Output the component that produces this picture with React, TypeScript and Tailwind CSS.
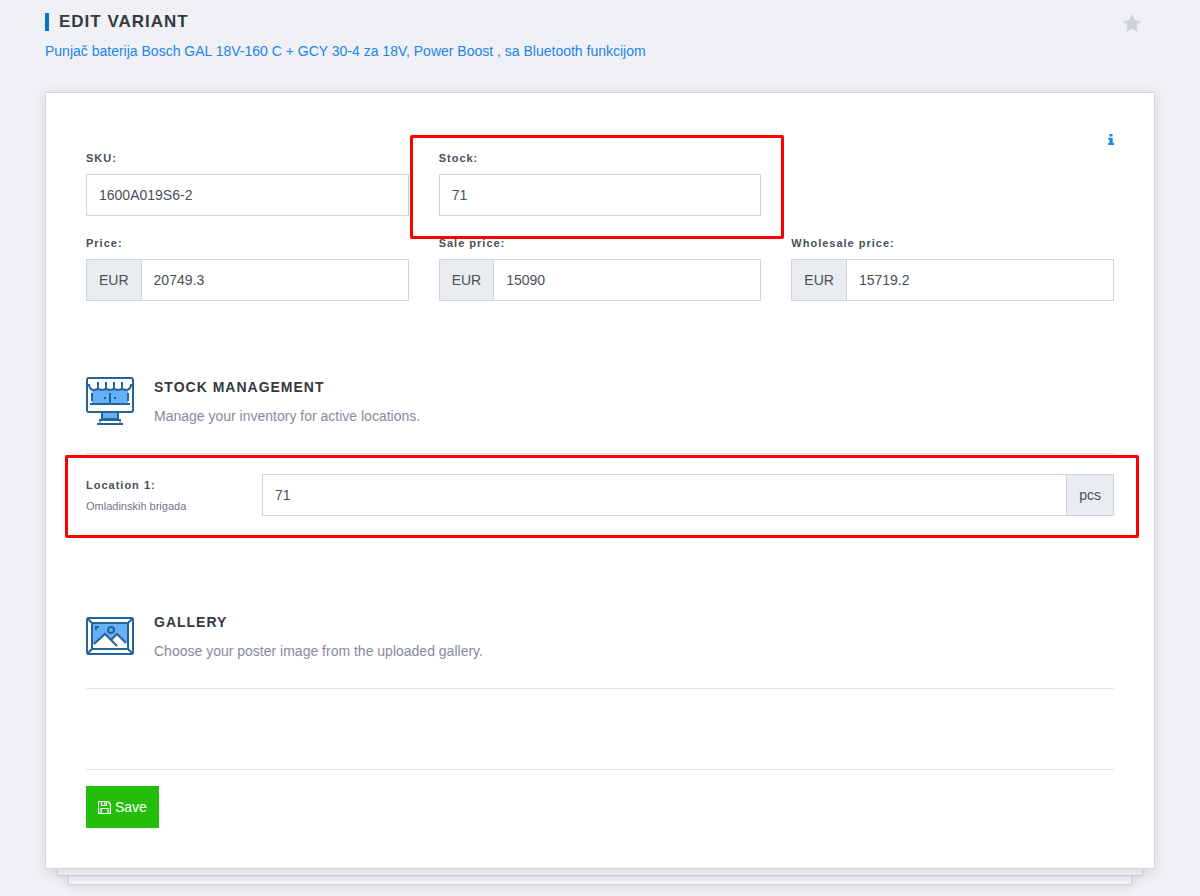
import React from 'react';

const BORDER = 'border-[#ced4da]';

type FieldProps = {
  id: string;
  label: string;
  value: string;
  prefix?: string;
  highlighted?: boolean;
};

function Field({ id, label, value, prefix, highlighted }: FieldProps) {
  return (
    <div className="relative flex min-w-0 flex-col gap-2">
      <label htmlFor={id} className="text-[11px] leading-4 font-bold tracking-[1px] text-[#495057]">
        {label}
      </label>
      <div className={`flex h-[42px] border bg-white ${BORDER}`}>
        {prefix && (
          <span className={`flex items-center border-r bg-[#e9ecf1] px-3 ${BORDER}`}>{prefix}</span>
        )}
        <input id={id} type="text" defaultValue={value} className="min-w-0 flex-1 bg-transparent px-3 outline-none" />
      </div>
      {highlighted && (
        <div className="pointer-events-none absolute -top-[15px] -right-[23px] -bottom-[23px] -left-[29px] rounded-[2px] border-3 border-[#ff0000]" />
      )}
    </div>
  );
}

function StarIcon() {
  return (
    <svg viewBox="0 0 20 19" className="h-[19px] w-5" fill="currentColor" aria-hidden="true">
      <path d="M10 0l2.700 6.200 6.800.7-5.100 4.500 1.500 6.900-5.900-3.500-5.900 3.500 1.500-6.900L.5 6.900l6.800-.7z" />
    </svg>
  );
}

function InfoIcon() {
  return (
    <svg viewBox="0 0 6 11" className="h-[11px] w-[6px]" fill="currentColor" aria-hidden="true">
      <path d="M1.500 0h3v2.500h-3zM.3 3.800h4.400V9H6v2H0V9h1.500V5.700H.3z" />
    </svg>
  );
}

function StoreIcon() {
  return (
    <svg viewBox="0 0 48 50" className="h-[50px] w-12 shrink-0" fill="none" stroke="#266396" strokeWidth="2" aria-hidden="true">
      <rect x="16" y="36" width="16" height="7" fill="#66b0f7" />
      <rect x="1" y="2" width="46" height="34" rx="2" fill="#fff" />
      <path d="M6 13h36v14H6z" fill="#66b0f7" stroke="none" />
      <path d="M1 9h2l1 3q1 2 4 2l4-1 4 1 4-1 4 1 4-1 4 1 4-1 4 1q3 0 4-2l1-3h2" />
      <path d="M12 6v7M20 6v7M28 6v7M36 6v7" />
      <path d="M6 17v8M42 17v8M24 17v10M4 28h40" />
      <path d="M18 22h2M28 22h2" />
      <path d="M13 44h22M11 48h26" />
      <path d="M14 44v4M34 44v4" strokeWidth="1" />
    </svg>
  );
}

function GalleryIcon() {
  return (
    <svg viewBox="0 0 48 38" className="h-[38px] w-12 shrink-0" fill="none" stroke="#266396" strokeWidth="2" aria-hidden="true">
      <rect x="1" y="1" width="46" height="36" rx="2" fill="#fff" />
      <rect x="6" y="6" width="36" height="26" fill="#66b0f7" />
      <path d="M7 28l12-11 7 6 5-6 11 10v4H7z" fill="#fff" stroke="none" />
      <path d="M8 27l11-10 12 12M25 23l6-6 9 9" />
      <circle cx="25" cy="13" r="3" />
      <path d="M10 13v-3h3" />
      <path d="M1 1l5 5M47 1l-5 5M1 37l5-5M47 37l-5-5" />
      <rect x="6" y="6" width="36" height="26" />
    </svg>
  );
}

function SaveIcon() {
  return (
    <svg viewBox="0 0 13 13" className="size-[13px]" fill="none" stroke="currentColor" strokeWidth="1.200" aria-hidden="true">
      <path d="M.5 1.500a1 1 0 0 1 1-1h8.500l2.500 2.500v8.500a1 1 0 0 1-1 1h-10a1 1 0 0 1-1-1z" />
      <path d="M3.500.5v4h5v-4M3 12.500v-5h7v5" />
      <path d="M7 1v3" />
    </svg>
  );
}

type SectionHeaderProps = { icon: React.ReactNode; title: string; text: string };

function SectionHeader({ icon, title, text }: SectionHeaderProps) {
  return (
    <div className="flex h-[78px] items-start gap-5 border-b border-[#e4e5e7]">
      {icon}
      <div className="flex flex-col gap-[9px] pt-px">
        <h2 className="text-sm leading-5 font-bold tracking-[1px] text-[#343a40]">{title}</h2>
        <p className="leading-5 text-[#868b9b]">{text}</p>
      </div>
    </div>
  );
}

export default function App() {
  return (
    <div className="min-h-screen bg-[#f0f1f7] px-[45px] pt-3 pb-2 font-['Liberation_Sans',Arial,sans-serif] text-sm text-[#495057]">
      <header className="flex h-20 items-start justify-between">
        <div>
          <h1 className="flex h-5 items-center gap-[10px] text-[17px] font-bold tracking-[1px] text-[#343a40]">
            <span className="h-[18px] w-1 bg-[#0275c5]" />
            EDIT VARIANT
          </h1>
          <a href="#product" className="mt-[7px] block leading-6 text-[#2185e8]">
            Punjač baterija Bosch GAL 18V-160 C + GCY 30-4 za 18V, Power Boost , sa Bluetooth funkcijom
          </a>
        </div>
        <button type="button" aria-label="Favorite" className="mt-[2px] mr-[13px] text-[#ccd3da]">
          <StarIcon />
        </button>
      </header>

      <main>
        <form
          className={`relative z-20 border bg-white p-10 shadow-[0_2px_12px_rgba(60,70,90,0.15)] ${BORDER}`}
          onSubmit={(event) => event.preventDefault()}
        >
          <div className="flex h-[17px] items-start justify-end">
            <button type="button" aria-label="Information" className="mt-px text-[#2185e8]">
              <InfoIcon />
            </button>
          </div>

          <div className="grid grid-cols-3 gap-x-[30px] gap-y-[19px]">
            <Field id="sku" label="SKU:" value="1600A019S6-2" />
            <Field id="stock" label="Stock:" value="71" highlighted />
            <div />
            <Field id="price" label="Price:" prefix="EUR" value="20749.3" />
            <Field id="sale-price" label="Sale price:" prefix="EUR" value="15090" />
            <Field id="wholesale-price" label="Wholesale price:" prefix="EUR" value="15719.2" />
          </div>

          <section className="mt-[75px]">
            <SectionHeader icon={<StoreIcon />} title="STOCK MANAGEMENT" text="Manage your inventory for active locations." />
            <div className="relative mt-5 flex">
              <label htmlFor="location-1" className="flex w-44 shrink-0 flex-col gap-[5px] pt-[3px] text-[11px] leading-4">
                <span className="font-bold tracking-[1px]">Location 1:</span>
                <span className="text-[#6f7588]">Omladinskih brigada</span>
              </label>
              <div className={`flex h-[42px] min-w-0 flex-1 border ${BORDER}`}>
                <input id="location-1" type="text" defaultValue="71" className="min-w-0 flex-1 px-3 outline-none" />
                <span className={`flex items-center border-l bg-[#e9ecf1] px-3 ${BORDER}`}>pcs</span>
              </div>
              <div className="pointer-events-none absolute -top-[19px] -right-[25px] -bottom-[22px] -left-[21px] rounded-[2px] border-3 border-[#ff0000]" />
            </div>
          </section>

          <section className="mt-[95px]">
            <SectionHeader
              icon={<div className="pt-[6px]"><GalleryIcon /></div>}
              title="GALLERY"
              text="Choose your poster image from the uploaded gallery."
            />
            <div className="h-20" />
          </section>

          <div className="border-t border-[#e4e5e7] pt-4">
            <button type="submit" className="flex h-[42px] items-center gap-1 bg-[#22be0a] px-3 text-white">
              <SaveIcon />
              Save
            </button>
          </div>
        </form>
        <div className={`relative z-10 mx-3 h-[7px] border border-t-0 bg-[#f3f3f3] shadow-[0_2px_10px_rgba(60,70,90,0.15)] ${BORDER}`} />
        <div className={`mx-[23px] h-[9px] border border-t-0 bg-[#f7f7f7] shadow-[0_2px_10px_rgba(60,70,90,0.15)] ${BORDER}`} />
      </main>
    </div>
  );
}
